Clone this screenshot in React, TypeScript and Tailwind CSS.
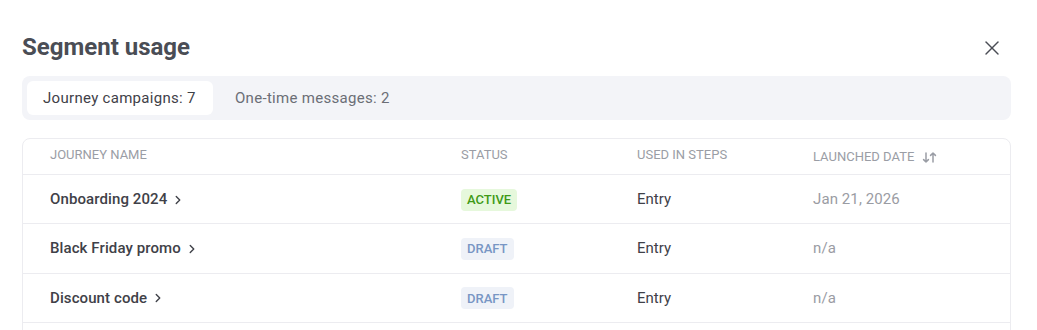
import { ChevronRight, X } from "lucide-react";

type Row = { name: string; status: "active" | "draft"; steps: string; date: string };

const rows: Row[] = [
  { name: "Onboarding 2024", status: "active", steps: "Entry", date: "Jan 21, 2026" },
  { name: "Black Friday promo", status: "draft", steps: "Entry", date: "n/a" },
  { name: "Discount code", status: "draft", steps: "Entry", date: "n/a" },
];

function SortIcon() {
  return (
    <svg width="15" height="11" viewBox="0 0 15 11" fill="none" stroke="currentColor" strokeWidth="1.5" strokeLinecap="round" strokeLinejoin="round">
      <path d="M4 1v9M1.6 7.6 4 10l2.4-2.4" />
      <path d="M11 10V1M8.6 3.4 11 1l2.4 2.4" />
    </svg>
  );
}

function Badge({ status }: { status: Row["status"] }) {
  return status === "active" ? (
    <span className="inline-flex h-[22px] items-center rounded bg-[#e6f8dc] px-[6px] text-[13px] font-medium text-[#3f9a17]">ACTIVE</span>
  ) : (
    <span className="inline-flex h-[22px] items-center rounded bg-[#eff2f8] px-[6px] text-[13px] font-medium text-[#7896c4]">DRAFT</span>
  );
}

export default function App() {
  return (
    <div className="h-[330px] overflow-hidden bg-white font-['Roboto',sans-serif] text-[#3f4148]">
      <div className="pl-[22px] pr-[33px] pt-[32px]">
        {/* Header */}
        <div className="flex items-center justify-between">
          <h1 className="text-[24px] font-bold leading-[30px] text-[#4a4d55]">Segment usage</h1>
          <button className="mt-[2px] text-[#4a4d55]">
            <X size={24} strokeWidth={1.4} />
          </button>
        </div>

        {/* Tabs */}
        <div className="mt-[14px] flex w-[989px] gap-[6px] rounded-lg bg-[#f3f4f8] p-[5px]">
          <div className="flex h-[34px] w-[186px] items-center rounded-md bg-white px-[16px] text-[15px] tracking-[0.3px] text-[#3f4148]">
            Journey campaigns: 7
          </div>
          <div className="flex h-[34px] items-center px-[16px] text-[15px] tracking-[0.3px] text-[#6b6e76]">One-time messages: 2</div>
        </div>

        {/* Table */}
        <div className="mt-[18px] w-[989px] rounded-t-lg border border-[#ececf0]">
          <div className="grid h-[36px] grid-cols-[411px_176px_176px_1fr] items-center border-b border-[#ececf0] pb-[3px] pl-[27px] text-[13px] text-[#9a9da5]">
            <span>JOURNEY NAME</span>
            <span>STATUS</span>
            <span>USED IN STEPS</span>
            <span className="mt-[4px] flex items-center gap-[8px]">
              LAUNCHED DATE <SortIcon />
            </span>
          </div>
          {rows.map((r) => (
            <div key={r.name} className="grid h-[49.4px] grid-cols-[411px_176px_176px_1fr] items-center border-b border-[#ececf0] pl-[27px] text-[15px]">
              <span className="flex items-center gap-[4px] font-medium tracking-[0.1px] text-[#3f4148]">
                {r.name}
                <ChevronRight size={14} strokeWidth={2.4} className="mt-[1px]" />
              </span>
              <span>
                <Badge status={r.status} />
              </span>
              <span className="text-[#3f4148]">{r.steps}</span>
              <span className="tracking-[0.1px] text-[#9a9ca3]">{r.date}</span>
            </div>
          ))}
          <div className="h-[20px]" />
        </div>
      </div>
    </div>
  );
}
